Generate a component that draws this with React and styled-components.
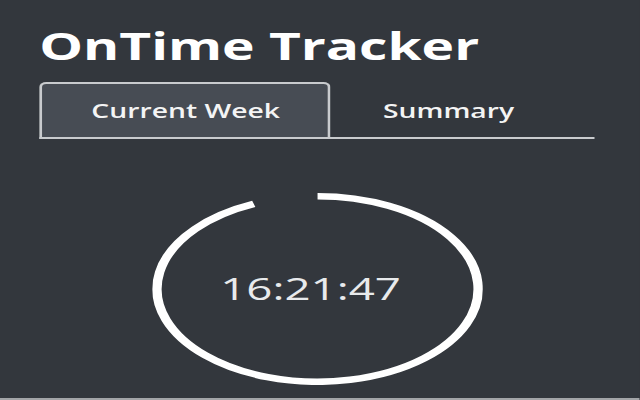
import React, { useState } from "react";
import styled, { createGlobalStyle } from "styled-components";

// the reference is a narrow popup stretched out to 640 wide
const SX = 1.45;

const GlobalStyle = createGlobalStyle`
  html, body {
    margin: 0;
    padding: 0;
    background: #33373d;
    overflow: hidden;
  }
`;

const Stage = styled.div`
  width: ${640 / SX}px;
  height: 400px;
  transform: scale(${SX}, 1);
  transform-origin: 0 0;
  background: #33373d;
  display: flex;
  flex-direction: column;
  font-family: "Open Sans", "Noto Sans", sans-serif;
  color: #fff;
`;

const Content = styled.div`
  flex: 1;
  padding: 26px 31px 0 27px;
  display: flex;
  flex-direction: column;
`;

const Title = styled.h1`
  margin: 0;
  font-size: 38px;
  line-height: 1;
  font-weight: 700;
  color: #fff;
`;

const Tabs = styled.div`
  margin-top: 18px;
  display: flex;
  border-bottom: 2px solid #c9cbce;
`;

const Tab = styled.button`
  height: 55px;
  padding: 0 33px 0 34px;
  font-family: inherit;
  font-size: 19.5px;
  font-weight: 600;
  color: #f4f4f4;
  background: ${(p) => (p.$active ? "#474c54" : "transparent")};
  border: 2px solid ${(p) => (p.$active ? "#c9cbce" : "transparent")};
  border-bottom: none;
  border-radius: 5px 5px 0 0;
  cursor: pointer;
`;

const TimerArea = styled.div`
  margin-top: 54px;
  display: flex;
  justify-content: center;
`;

const Ring = styled.div`
  display: grid;
  width: 228px;
  height: 192px;

  & > * {
    grid-area: 1 / 1;
  }
`;

const TimeText = styled.div`
  align-self: center;
  justify-self: center;
  font-size: 31.5px;
  font-weight: 500;
  color: #e8eaec;
  margin-top: -3px;
  margin-left: -9px;
`;

const Footer = styled.div`
  height: 0;
  border-top: 2px solid #a3a5a8;
`;

function ProgressRing({ progress }) {
  const w = 228;
  const h = 192;
  const stroke = 6.5;
  const rx = (w - stroke) / 2;
  const ry = (h - stroke) / 2;
  const cx = w / 2;
  const cy = h / 2;
  const t = progress * 2 * Math.PI;
  const ex = cx + rx * Math.sin(t);
  const ey = cy - ry * Math.cos(t);
  const large = progress > 0.5 ? 1 : 0;
  const d = `M ${cx} ${cy - ry} A ${rx} ${ry} 0 ${large} 1 ${ex} ${ey}`;
  return (
    <svg width={w} height={h} viewBox={`0 0 ${w} ${h}`}>
      <path d={d} fill="none" stroke="#ffffff" strokeWidth={stroke} />
    </svg>
  );
}

export default function App() {
  const [tab, setTab] = useState("week");

  return (
    <>
      <GlobalStyle />
      <Stage>
        <Content>
          <Title>OnTime Tracker</Title>
          <Tabs>
            <Tab $active={tab === "week"} onClick={() => setTab("week")}>
              Current Week
            </Tab>
            <Tab $active={tab === "summary"} onClick={() => setTab("summary")}>
              Summary
            </Tab>
          </Tabs>
          <TimerArea>
            <Ring>
              <ProgressRing progress={0.935} />
              <TimeText>16:21:47</TimeText>
            </Ring>
          </TimerArea>
        </Content>
        <Footer />
      </Stage>
    </>
  );
}
